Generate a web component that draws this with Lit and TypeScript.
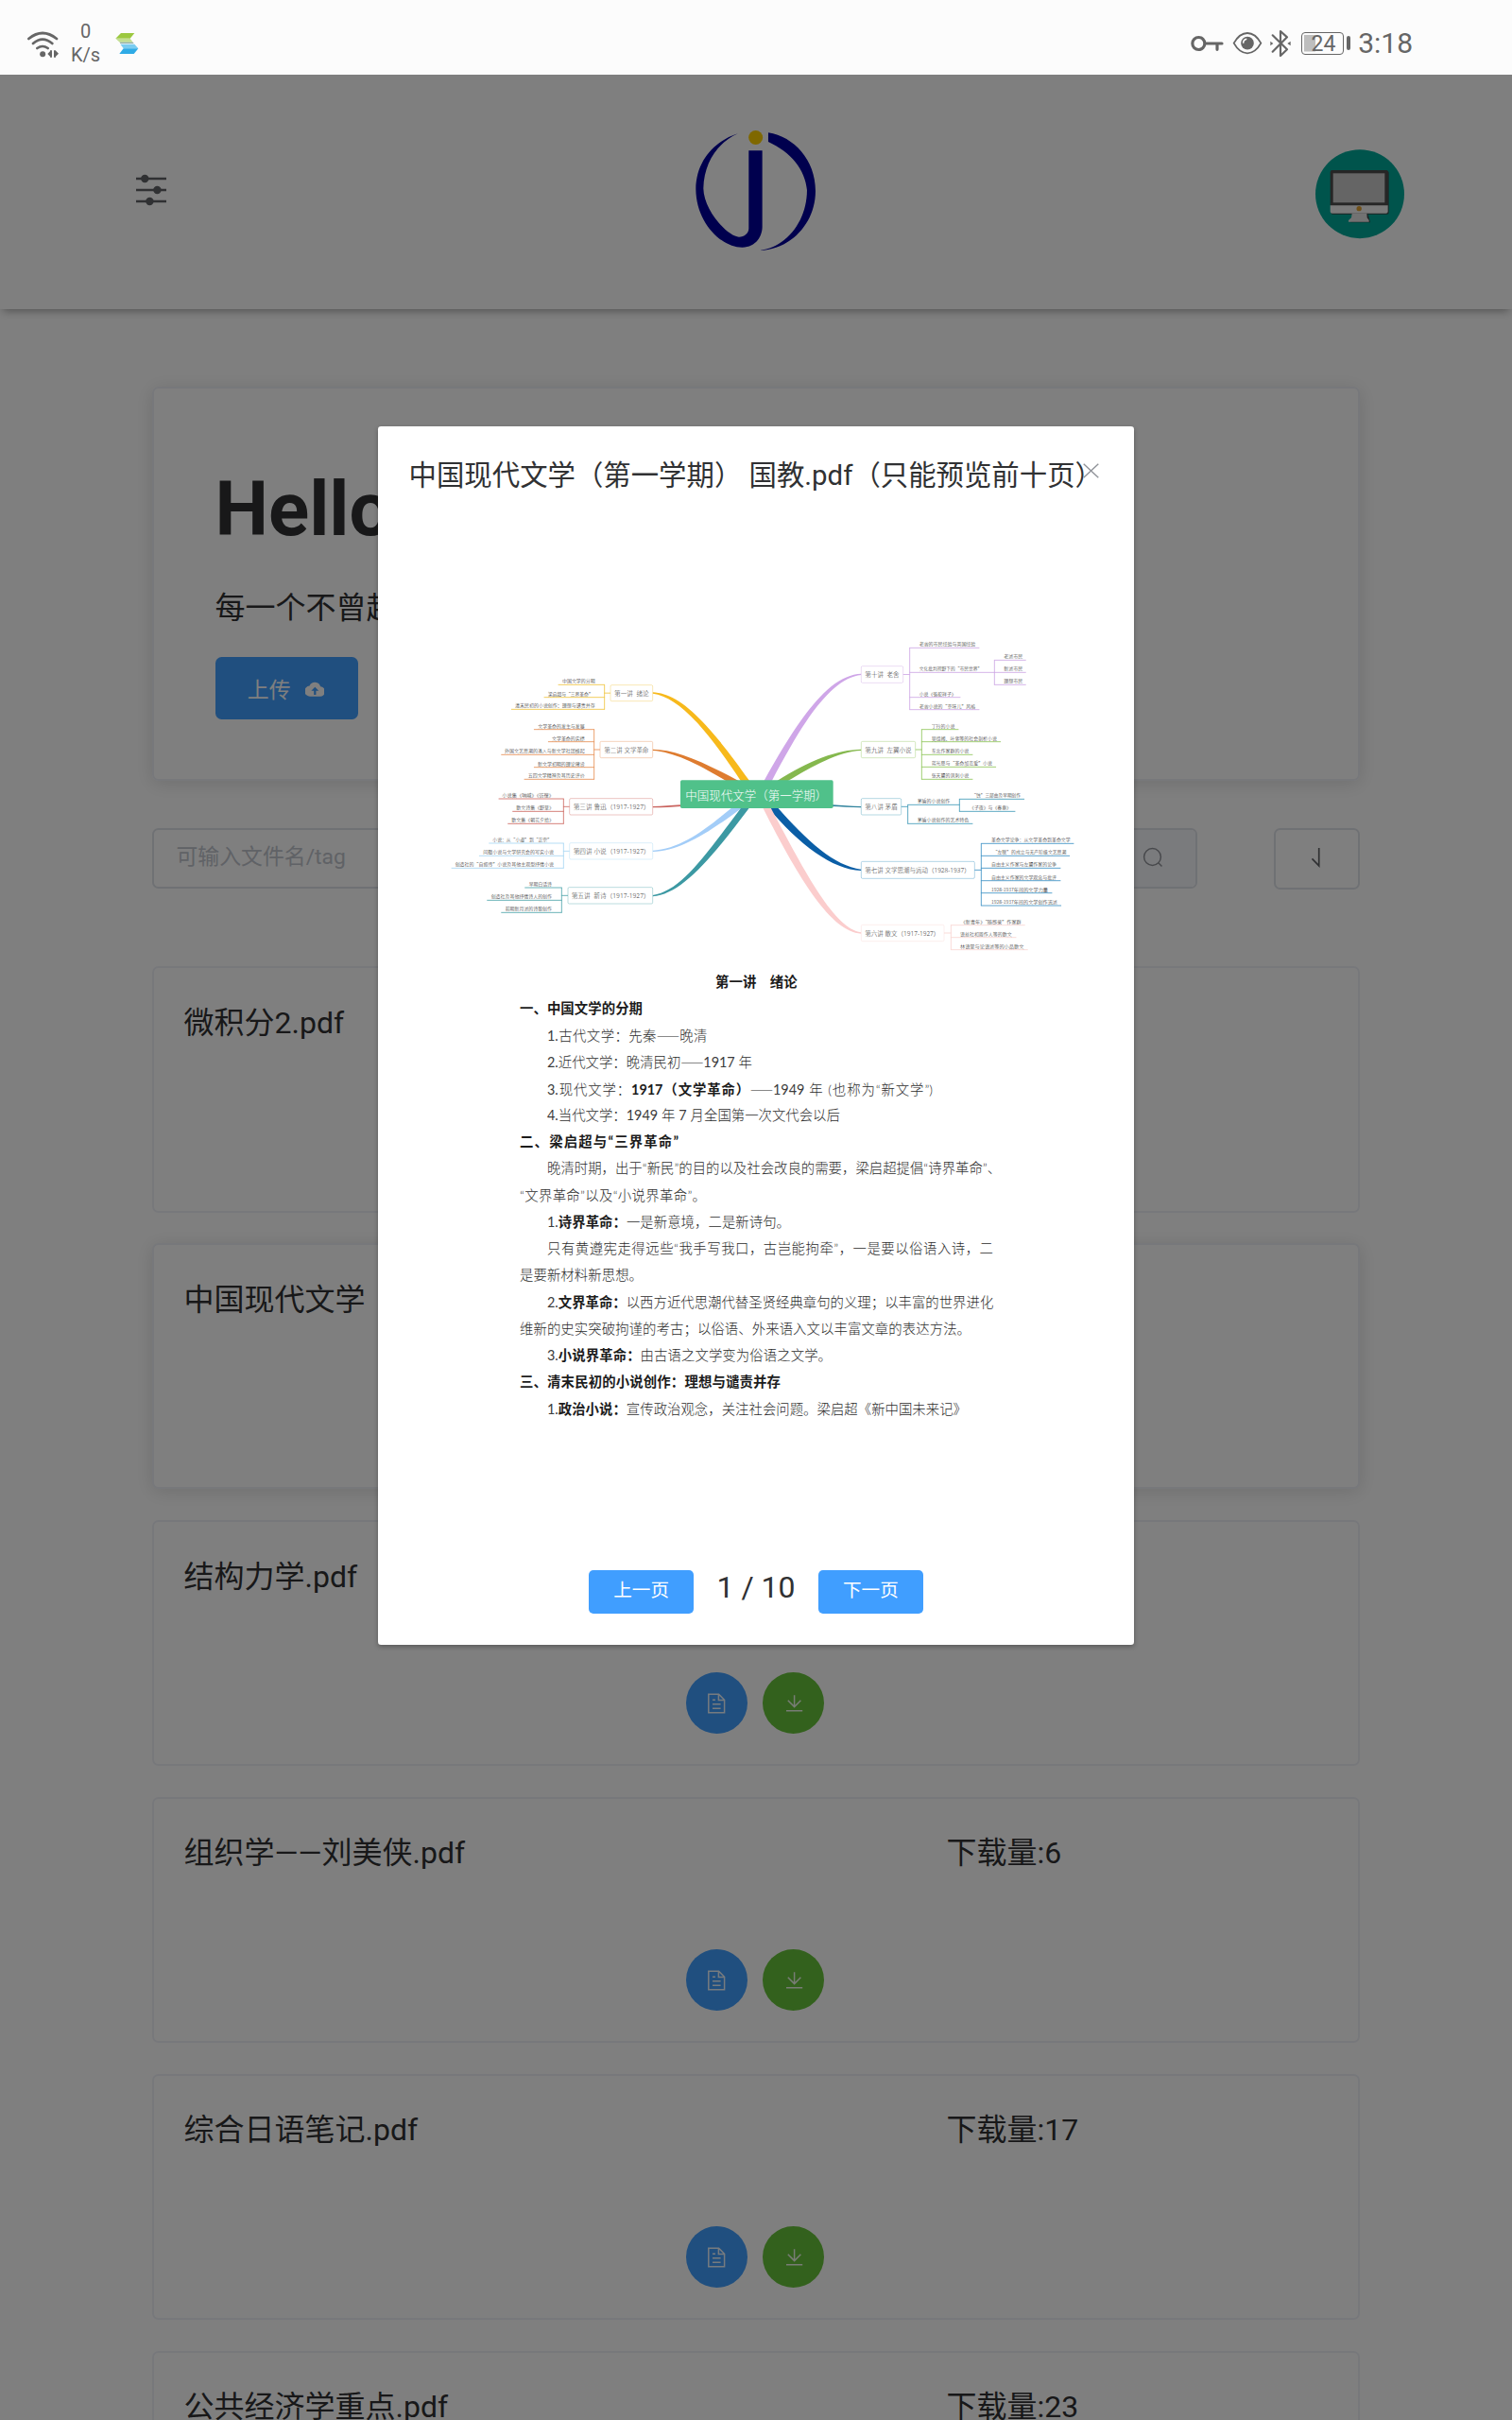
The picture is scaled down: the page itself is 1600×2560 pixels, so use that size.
import { LitElement, html, svg, css, nothing } from "lit";
import { customElement, property } from "lit/decorators.js";

type Leaf = { t: string; a: number; b: number; y: number; e: number; subs?: Leaf[]; sx?: number };
type Branch = {
  name: string;
  side: "l" | "r";
  line: string;
  fill: string;
  curve: string;
  box: [number, number, number, number];
  tx: [number, number];
  spine: number;
  leaves: Leaf[];
};

const leaf = (t: string, a: number, b: number, y: number, e: number, subs?: Leaf[], sx?: number): Leaf => ({ t, a, b, y, e, subs, sx });

const BRANCHES: Branch[] = [
  {
    name: "第一讲  绪论", side: "l", line: "#f0c646", fill: "#f7b91c", box: [558, 197, 692, 248], tx: [570, 680], spine: 539,
    curve: "M692 220 C770 224 850 290 1000 502 L972 502 C850 318 770 235 692 224Z",
    leaves: [
      leaf("中国文学的分期", 405, 509, 196, 393),
      leaf("梁启超与“三界革命”", 360, 503, 236, 348),
      leaf("清末民初的小说创作：理想与谴责并存", 255, 509, 274, 244),
    ],
  },
  {
    name: "第二讲 文学革命", side: "l", line: "#e8935a", fill: "#de7c30", box: [525, 376, 692, 428], tx: [538, 679], spine: 506,
    curve: "M692 401 C760 401 850 438 966 502 L926 502 C840 450 760 409 692 405Z",
    leaves: [
      leaf("文学革命的发生与发展", 328, 476, 338, 316),
      leaf("文学革命的实绩", 372, 476, 377, 361),
      leaf("外国文艺思潮的涌入与新文学社团蜂起", 222, 476, 418, 212),
      leaf("新文学初期的理论建设", 327, 476, 458, 316),
      leaf("五四文学精神及其历史评价", 296, 476, 496, 285),
    ],
  },
  {
    name: "第三讲 鲁迅（1917-1927）", side: "l", line: "#cf6d66", fill: "#c9635e", box: [428, 557, 692, 609], tx: [440, 683], spine: 409,
    curve: "M692 582 C725 582 750 579 782 577 L782 582 C750 584 725 586 692 586Z",
    leaves: [
      leaf("小说集《呐喊》《彷徨》", 214, 378, 558, 204),
      leaf("散文诗集《野草》", 259, 378, 598, 248),
      leaf("散文集《朝花夕拾》", 244, 378, 637, 233),
    ],
  },
  {
    name: "第四讲 小说（1917-1927）", side: "l", line: "#a9d8f3", fill: "#a3cdf8", box: [428, 698, 692, 750], tx: [440, 683], spine: 409,
    curve: "M692 722 C780 718 860 655 945 585 L978 585 C870 665 780 724 692 726Z",
    leaves: [
      leaf("小说：从“小道”到“正宗”", 184, 372, 699, 173),
      leaf("问题小说与文学研究会的写实小说", 154, 378, 739, 142),
      leaf("创造社的“自叙传”小说及其他主观型抒情小说", 65, 378, 778, 54),
    ],
  },
  {
    name: "第五讲  新诗（1917-1927）", side: "l", line: "#52a8ae", fill: "#3c99a3", box: [423, 839, 692, 891], tx: [434, 683], spine: 403,
    curve: "M692 864 C780 850 850 750 974 585 L1000 585 C865 765 780 860 692 868Z",
    leaves: [
      leaf("早期白话诗", 299, 372, 840, 287),
      leaf("创造社及其他抒情诗人的创作", 179, 372, 880, 167),
      leaf("前期新月派的诗歌创作", 224, 372, 919, 212),
    ],
  },
  {
    name: "第十讲  老舍", side: "r", line: "#cfa9e6", fill: "#cfa6e8", box: [1354, 137, 1487, 190], tx: [1366, 1475], spine: 1508,
    curve: "M1354 161 C1260 165 1170 275 1045 502 L1070 502 C1180 290 1265 175 1354 165Z",
    leaves: [
      leaf("老舍的市民经验与英国经验", 1538, 1717, 79, 1728),
      leaf("文化批判视野下的“市民世界”", 1538, 1738, 157, 1777, [
        leaf("老派市民", 1807, 1867, 118, 1876),
        leaf("新派市民", 1807, 1867, 157, 1876),
        leaf("理想市民", 1807, 1867, 196, 1876),
      ], 1777),
      leaf("小说《骆驼祥子》", 1538, 1655, 236, 1668),
      leaf("老舍小说的“京味儿”风格", 1538, 1717, 275, 1728),
    ],
  },
  {
    name: "第九讲  左翼小说", side: "r", line: "#93c75f", fill: "#85b84e", box: [1354, 376, 1526, 428], tx: [1366, 1514], spine: 1546,
    curve: "M1354 401 C1280 402 1190 435 1086 502 L1120 502 C1200 455 1280 408 1354 405Z",
    leaves: [
      leaf("丁玲的小说", 1577, 1651, 338, 1662),
      leaf("吴组缃、叶紫等的社会剖析小说", 1577, 1785, 377, 1796),
      leaf("东北作家群的小说", 1577, 1696, 418, 1707),
      leaf("蒋光慈与“革命加恋爱”小说", 1577, 1770, 457, 1781),
      leaf("张天翼的讽刺小说", 1577, 1696, 496, 1707),
    ],
  },
  {
    name: "第八讲 茅盾", side: "r", line: "#459cb9", fill: "#2f829c", box: [1354, 557, 1481, 609], tx: [1366, 1469], spine: 1502,
    curve: "M1262 577 C1290 579 1320 582 1354 582 L1354 586 C1320 585 1290 583 1262 582Z",
    leaves: [
      leaf("茅盾的小说创作", 1532, 1636, 577, 1666, [
        leaf("“蚀”三部曲及早期创作", 1705, 1860, 559, 1871),
        leaf("《子夜》与《春蚕》", 1698, 1830, 598, 1842),
      ], 1666),
      leaf("茅盾小说创作的艺术特色", 1532, 1696, 637, 1707),
    ],
  },
  {
    name: "第七讲 文学思潮与运动（1928-1937）", side: "r", line: "#4294c6", fill: "#0b5ea6", box: [1354, 757, 1714, 811], tx: [1366, 1700], spine: 1735,
    curve: "M1354 782 C1270 772 1180 690 1088 585 L1057 585 C1160 705 1260 782 1354 786Z",
    leaves: [
      leaf("革命文学论争：从文学革命到革命文学", 1767, 2018, 700, 2028),
      leaf("“左联”的成立与无产阶级文艺思潮", 1772, 2005, 739, 2015),
      leaf("自由主义作家与左翼作家的论争", 1767, 1974, 778, 1986),
      leaf("自由主义作家的文学观念与批评", 1767, 1974, 818, 1986),
      leaf("1928-1937年间的文学力量", 1767, 1947, 857, 1959),
      leaf("1928-1937年间的文学创作流派", 1767, 1977, 897, 1988),
    ],
  },
  {
    name: "第六讲 散文（1917-1927）", side: "r", line: "#f9d6d3", fill: "#fbcdcd", box: [1354, 958, 1617, 1010], tx: [1366, 1603], spine: 1639,
    curve: "M1354 982 C1270 970 1180 800 1066 585 L1041 585 C1160 820 1260 980 1354 986Z",
    leaves: [
      leaf("《新青年》“随感录”作家群", 1670, 1862, 959, 1873),
      leaf("语丝社和周作人等的散文", 1668, 1832, 998, 1845),
      leaf("林语堂与论语派等的小品散文", 1668, 1870, 1037, 1882),
    ],
  },
];

@customElement("mind-map")
class MindMap extends LitElement {
  static styles = css`
    :host { display: block; padding-left: 60px; }
    svg { display: block; width: 700px; height: 360px; }
    text { font-family: "Noto Sans CJK SC", sans-serif; white-space: pre; }
    .leaf { font-size: 15px; fill: #222; }
    .node { font-size: 20px; fill: #333; font-family: "Noto Sans", "Noto Sans CJK SC", sans-serif; }
    .root { font-size: 38px; fill: #fff; }
  `;

  private leafText(l: Leaf) {
    return svg`<text class="leaf" x=${l.a} y=${l.y - 6} textLength=${l.b - l.a} lengthAdjust="spacingAndGlyphs">${l.t}</text>`;
  }

  private spine(x: number, leaves: Leaf[]) {
    const top = leaves[0].y;
    const bottom = leaves[leaves.length - 1].y;
    return svg`<path d=${`M${x} ${top + 1}V${bottom - 1}`} />${leaves.map((l) => svg`<path d=${`M${l.e} ${l.y}H${x}`} />`)}`;
  }

  private branch(b: Branch) {
    const [x0, y0, x1, y1] = b.box;
    const mid = (y0 + y1) / 2;
    const inner = b.side === "l" ? x0 : x1;
    return svg`
      <path d=${b.curve} fill=${b.fill} />
      <g fill="none" stroke=${b.line} stroke-width="2.6" stroke-linecap="round">
        ${this.spine(b.spine, b.leaves)}
        <path d=${`M${inner} ${mid}H${b.spine}`} />
        ${b.leaves.map((l) => (l.subs ? this.spine(l.sx!, l.subs) : nothing))}
      </g>
      <rect x=${x0} y=${y0} width=${x1 - x0} height=${y1 - y0} rx="4" fill="#fff" stroke=${b.line} stroke-width="1.6" stroke-opacity=".75" />
      <text class="node" x=${b.tx[0]} y=${mid + 7.5} textLength=${b.tx[1] - b.tx[0]} lengthAdjust="spacingAndGlyphs">${b.name}</text>
      ${b.leaves.map((l) => svg`${this.leafText(l)}${(l.subs ?? []).map((s) => this.leafText(s))}`)}
    `;
  }

  render() {
    return html`<svg viewBox="0 0 2100 1080">
      ${BRANCHES.map((b) => this.branch(b))}
      <rect x="780" y="499" width="485" height="89" rx="5" fill="#50c18a" />
      <text class="root" x="796" y="562" textLength="450" lengthAdjust="spacingAndGlyphs">中国现代文学（第一学期）</text>
    </svg>`;
  }
}

const dash = html`<span class="dash">——</span>`;

@customElement("pdf-page")
class PdfPage extends LitElement {
  static styles = css`
    :host { display: block; font: 300 14.4px/28.25px Lato, "Noto Sans CJK SC", sans-serif; color: #2c2c2c; }
    .doc { display: flex; flex-direction: column; align-items: flex-start; padding: 5.5px 0 0 150px; }
    .line { height: 28.25px; white-space: nowrap; text-align: justify; text-align-last: justify; }
    .in { margin-left: 29px; }
    .title { margin-left: 207px; }
    b, .strong { font-weight: 700; color: #1c1c1c; }
    .n { font-weight: 400; color: #3c3c3c; }
    .dash { font-family: "Noto Sans CJK SC", sans-serif; }
  `;

  private line(cls: string, width: number, content: unknown) {
    return html`<div class="line ${cls}" style="width:${width}px">${content}</div>`;
  }

  render() {
    return html`<mind-map></mind-map>
      <div class="doc">
        ${this.line("title strong", 86.7, "第一讲　绪论")}
        ${this.line("strong", 130, "一、中国文学的分期")}
        ${this.line("in", 169.5, html`<span class="n">1.</span>古代文学：先秦${dash}晚清`)}
        ${this.line("in", 217, html`<span class="n">2.</span>近代文学：晚清民初${dash}<span class="n">1917</span> 年`)}
        ${this.line("in", 408, html`<span class="n">3.</span>现代文学：<b>1917（文学革命）</b>${dash}<span class="n">1949</span> 年 (也称为“新文学”)`)}
        ${this.line("in", 301, html`<span class="n">4.</span>当代文学：<span class="n">1949</span> 年 <span class="n">7</span> 月全国第一次文代会以后`)}
        ${this.line("strong", 168, "二、梁启超与“三界革命”")}
        ${this.line("in", 478, "晚清时期，出于“新民”的目的以及社会改良的需要，梁启超提倡“诗界革命”、")}
        ${this.line("", 197, "“文界革命”以及“小说界革命”。")}
        ${this.line("in", 257, html`<span class="n">1.</span><b>诗界革命：</b>一是新意境，二是新诗句。`)}
        ${this.line("in", 472, "只有黄遵宪走得远些“我手写我口，古岂能拘牵”，一是要以俗语入诗，二")}
        ${this.line("", 130, "是要新材料新思想。")}
        ${this.line("in", 472, html`<span class="n">2.</span><b>文界革命：</b>以西方近代思潮代替圣贤经典章句的义理；以丰富的世界进化`)}
        ${this.line("", 477, "维新的史实突破拘谨的考古；以俗语、外来语入文以丰富文章的表达方法。")}
        ${this.line("in", 301, html`<span class="n">3.</span><b>小说界革命：</b>由古语之文学变为俗语之文学。`)}
        ${this.line("strong", 276, "三、清末民初的小说创作：理想与谴责并存")}
        ${this.line("in", 444, html`<span class="n">1.</span><b>政治小说：</b>宣传政治观念，关注社会问题。梁启超《新中国未来记》`)}
      </div>`;
  }
}

@customElement("file-card")
class FileCard extends LitElement {
  @property() name = "";
  @property({ type: Number }) count?: number;

  static styles = css`
    :host { display: flex; flex-direction: column; justify-content: space-between; box-sizing: border-box; height: 260.3px; flex: none;
      padding: 33.5px 33.5px 32px 31.5px; border: 2px solid #eff1f7; border-radius: 6.5px; background: #fff; }
    :host([raised]) { box-shadow: 0 3px 20px rgba(0, 0, 0, 0.13); }
    .row { display: grid; grid-template-columns: 807px 1fr; line-height: 48px; }
    .actions { display: flex; justify-content: center; gap: 16.3px; }
    .round { width: 65.3px; height: 65.3px; border-radius: 50%; display: grid; place-items: center; background: #409eff; }
    .green { background: #67c23a; }
    svg { width: 24px; height: 24px; fill: none; stroke: #fff; stroke-width: 1.5; stroke-opacity: 0.9; }
  `;

  render() {
    return html`<div class="row"><span>${this.name}</span><span>${this.count === undefined ? nothing : `下载量:${this.count}`}</span></div>
      <div class="actions">
        <span class="round"><svg viewBox="0 0 24 24"><path d="M3.8 2.2H14.6L20.6 8.2V21.8H3.8ZM14.4 2.4V8.4H20.4M8 8.3H11M8 12.8H16.6M8 17.2H16.6" /></svg></span>
        <span class="round green"><svg viewBox="0 0 24 24"><path d="M12.6 3.2V15.6M5.8 8.8L12.6 15.6L19.4 8.8M4 19.8H21.2" /></svg></span>
      </div>`;
  }
}

@customElement("app-root")
class AppRoot extends LitElement {
  static styles = css`
    :host { display: block; width: 1600px; height: 2560px; overflow: hidden; background: #fff; color: #303133;
      font-family: Roboto, "Noto Sans CJK SC", sans-serif; font-size: 32px; }
    * { box-sizing: border-box; }
    svg { display: block; flex: none; }
    .status { height: 79px; background: #fcfcfc; display: flex; justify-content: space-between; padding: 0 105px 0 28px; color: #666; }
    .status-l, .status-r { display: flex; align-items: center; }
    .status-r { padding-top: 12px; }
    .status-l { padding-top: 13px; }
    .wifi { width: 35px; height: 30px; }
    .speed { width: 55px; margin-right: 4px; font-size: 20px; line-height: 24.3px; text-align: center; font-weight: 400; padding-bottom: 1px; }
    .app { width: 25px; height: 24px; }
    .key { width: 35px; height: 30px; }
    .eye { width: 32px; height: 30px; margin-left: 8.5px; }
    .bt { width: 24px; height: 30px; margin-left: 7.5px; }
    .battery { width: 45px; height: 24px; border: 1.5px solid #666; border-radius: 4px; margin-left: 10px; padding: 1px 0 0 2px;
      font-size: 23px; line-height: 21px; text-align: center; background: linear-gradient(#bebebe, #bebebe) 2px 2px / 12px 17.5px no-repeat; font-weight: 400; }
    .nub { width: 3.6px; height: 15px; border-radius: 2px; background: #666; margin-left: 3px; }
    .time { font-size: 30px; margin-left: 8.5px; line-height: 30px; }

    .page { position: relative; height: 2481px; overflow: hidden; }
    .header { height: 248px; display: grid; grid-template-columns: 1fr 134px 1fr; align-items: center; padding: 0 114px 0 144px;
      background: #fff; box-shadow: 0 5px 9px -3px rgba(0, 0, 0, 0.36); }
    .sliders { width: 32px; height: 34px; margin-top: -4px; }
    .logo { width: 133.3px; height: 133.3px; margin-left: -31.5px; }
    .avatar { width: 94px; height: 94.3px; justify-self: end; margin-top: 5px; }

    .main { display: flex; flex-direction: column; padding: 82px 161px 0 161px; }
    .hero { height: 417px; border: 2px solid #eff1f7; border-radius: 6.5px; padding: 67.5px 64.5px; box-shadow: 0 3px 20px rgba(0, 0, 0, 0.13);
      display: flex; flex-direction: column; align-items: flex-start; }
    h1 { margin: 0; font: 700 80px/120px Roboto, sans-serif; flex: none; }
    .motto { margin: 24px 0 31px; line-height: 41.5px; flex: none; }
    .upload { height: 66px; flex: none; width: 151px; border-radius: 6.5px; background: #409eff; color: #fff; font-size: 22.86px;
      display: flex; align-items: center; gap: 15px; padding-left: 34.3px; }
    .cloud { width: 20.6px; height: 17px; margin-top: 1px; }
    .tools { display: flex; justify-content: space-between; margin-top: 50px; height: 65px; }
    .search { width: 1105.5px; height: 64px; border: 2px solid #dfe2e8; border-radius: 6.5px; display: flex; justify-content: space-between; overflow: hidden;
      font-size: 22.86px; line-height: 58px; color: #c0c4cc; padding-left: 23.5px; }
    .append { width: 92px; background: #f5f7fa; border-left: 2px solid #dfe2e8; display: grid; place-items: center; padding-bottom: 3px; }
    .glass { width: 22px; height: 22px; }
    .sort { width: 91px; border: 2px solid #dfe2e8; border-radius: 6.5px; display: grid; place-items: center; padding-bottom: 2px; }
    .sort svg { width: 22.86px; height: 22.86px; }
    .list { display: flex; flex-direction: column; gap: 32.6px; margin-top: 81.3px; }

    .overlay { position: absolute; inset: 0; background: rgba(0, 0, 0, 0.5); display: flex; justify-content: center; align-items: flex-start; padding-top: 372px; }
    .dialog { width: 800px; height: 1289px; background: #fff; border-radius: 3.3px; box-shadow: 0 2px 5px rgba(0, 0, 0, 0.3);
      display: flex; flex-direction: column; justify-content: space-between; padding-bottom: 33px; }
    .head { display: flex; align-items: flex-start; padding: 32.6px 32.6px 0; height: 88px; font-size: 29.4px; line-height: 39.2px; white-space: nowrap; }
    .title { width: 713px; }
    .close { width: 17px; height: 16px; margin-top: 6px; }
    .body { display: flex; flex-direction: column; flex: 1; padding-top: 120px; }
    pdf-page { width: 800px; }
    .pager { display: flex; justify-content: center; align-items: flex-start; gap: 24.4px; }
    .btn { width: 111px; height: 46px; border-radius: 4.9px; background: #409eff; color: #fff; font-size: 19.6px; line-height: 44px; text-align: center; }
    .num { line-height: 37px; width: 83px; text-align: center; white-space: nowrap; }
  `;

  render() {
    return html`
      <div class="status">
        <div class="status-l">
          <svg class="wifi" viewBox="84 88 105 90">
            <g fill="none" stroke="#666" stroke-width="8" stroke-linecap="round">
              <path d="M91 118Q135 82 180 118M105 133Q135 107 166 133M118 148Q135 136 152 148" />
            </g>
            <circle cx="135.5" cy="167" r="9" fill="#666" />
            <path d="M151 166L159 158V155H165V177H159V174ZM171 155H176L186 165L177 174V177H171Z" fill="#666" />
          </svg>
          <div class="speed">0<br />K/s</div>
          <svg class="app" viewBox="365 102 75 72">
            <path d="M383 105H426L412 122H366Z" fill="#9cc83f" />
            <path d="M366 122H412L421 134H379Z" fill="#c3df92" />
            <path d="M379 134.5H421L424 138H381Z" fill="#8eaaa8" />
            <path d="M381 140H426L438 154H391Z" fill="#7accf0" />
            <path d="M391 154H438L424 171H378Z" fill="#2fabe6" />
          </svg>
        </div>
        <div class="status-r">
          <svg class="key" viewBox="185 90 105 90">
            <circle cx="210" cy="135" r="19.5" fill="none" stroke="#666" stroke-width="9.5" />
            <path d="M231 135H284M269 137V154" fill="none" stroke="#666" stroke-width="9.5" stroke-linecap="round" />
          </svg>
          <svg class="eye" viewBox="315 90 96 90">
            <path d="M320 134Q338 102 363 102T406 134Q388 166 363 166T320 134Z" fill="none" stroke="#666" stroke-width="5.5" />
            <circle cx="363" cy="134" r="20.5" fill="#666" />
            <path d="M350 134A13 13 0 0 1 361 121" fill="none" stroke="#fcfcfc" stroke-width="4.5" />
          </svg>
          <svg class="bt" viewBox="430 90 72 90">
            <path d="M441 109L487 154L466 174V96L487 115L441 161" fill="none" stroke="#666" stroke-width="6.5" stroke-linejoin="round" stroke-linecap="round" />
            <path d="M434 128L443 135L434 142ZM498 128L488 135L498 142Z" fill="#666" />
          </svg>
          <div class="battery">24</div>
          <div class="nub"></div>
          <div class="time">3:18</div>
        </div>
      </div>
      <div class="page">
        <div class="header">
          <svg class="sliders" viewBox="0 0 32 34" stroke="#606266" fill="#606266">
            <path d="M0 5H32M0 17H32M0 29H32" stroke-width="2.7" />
            <g stroke="none"><circle cx="9.3" cy="5" r="4.2" /><circle cx="22.4" cy="17" r="4.2" /><circle cx="14.4" cy="29" r="4.2" /></g>
          </svg>
          <svg class="logo" viewBox="110 80 400 400" overflow="visible">
            <path fill="#00009c" d="M302 96C230 118 169 180 168 272C169 380 250 458 316 457C355 457 379 425 379 392V150H336V397C336 412 322 424 305 424C270 424 193 340 192 270C194 190 235 125 302 96Z" />
            <path fill="#00009c" d="M398 93C480 106 548 180 548 278C548 380 470 464 371 467C460 455 521 370 521 275C515 210 470 155 398 122Z" />
            <circle cx="358" cy="108.500" r="22.500" fill="#ffd000" />
          </svg>
          <svg class="avatar" viewBox="577 475 282 283">
            <circle cx="718" cy="616.500" r="141" fill="#00a898" />
            <rect x="626" y="543" width="184" height="138" rx="6" fill="#3c4746" />
            <rect x="624" y="541" width="184" height="116" rx="6" fill="#4c4c4c" />
            <rect x="633" y="551" width="164" height="93" fill="#cbcbcb" />
            <path d="M624 653H807V672Q807 678 801 678H630Q624 678 624 672Z" fill="#f4f4f4" />
            <path d="M743 678L751 707H686Z" fill="#3c4746" />
            <path d="M693 678H740L741 692L747 700V705H682V700L691 692Z" fill="#e4e4e4" />
            <circle cx="715.500" cy="663" r="8" fill="#e0a030" />
          </svg>
        </div>
        <div class="main">
          <div class="hero">
            <h1>Hello</h1>
            <div class="motto">每一个不曾起</div>
            <div class="upload">上传
              <svg class="cloud" viewBox="0 0 24 19"><path fill="#fff" fill-rule="evenodd" d="M18.800 7A7.200 7.200 0 0 0 5.300 6A6.300 6.300 0 0 0 6.300 19H18A6 6 0 0 0 18.800 7ZM12 7.500L16.600 12.200H13.300V17H10.700V12.200H7.400Z" /></svg>
            </div>
          </div>
          <div class="tools">
            <div class="search">可输入文件名/tag
              <span class="append"><svg class="glass" viewBox="0 0 22 22" fill="none" stroke="#909399" stroke-width="1.500"><circle cx="10.500" cy="10.500" r="8.900" /><path d="M16.800 16.800L20.500 20.500" /></svg></span>
            </div>
            <div class="sort"><svg viewBox="0 0 23 23" fill="none" stroke="#606266" stroke-width="1.700"><path d="M13.800 1V20L6.500 12.500" /></svg></div>
          </div>
          <div class="list">
            <file-card name="微积分2.pdf"></file-card>
            <file-card name="中国现代文学" raised></file-card>
            <file-card name="结构力学.pdf"></file-card>
            <file-card name="组织学——刘美侠.pdf" .count=${6}></file-card>
            <file-card name="综合日语笔记.pdf" .count=${17}></file-card>
            <file-card name="公共经济学重点.pdf" .count=${23}></file-card>
          </div>
        </div>
        <div class="overlay">
          <div class="dialog">
            <div class="head">
              <span class="title">中国现代文学（第一学期） 国教.pdf（只能预览前十页）</span>
              <svg class="close" viewBox="0 0 17 16" stroke="#909399" stroke-width="1.400"><path d="M.700 .700L16.300 15.300M16.300 .700L.700 15.300" /></svg>
            </div>
            <div class="body"><pdf-page></pdf-page></div>
            <div class="pager"><span class="btn">上一页</span><span class="num">1 / 10</span><span class="btn">下一页</span></div>
          </div>
        </div>
      </div>
    `;
  }
}
